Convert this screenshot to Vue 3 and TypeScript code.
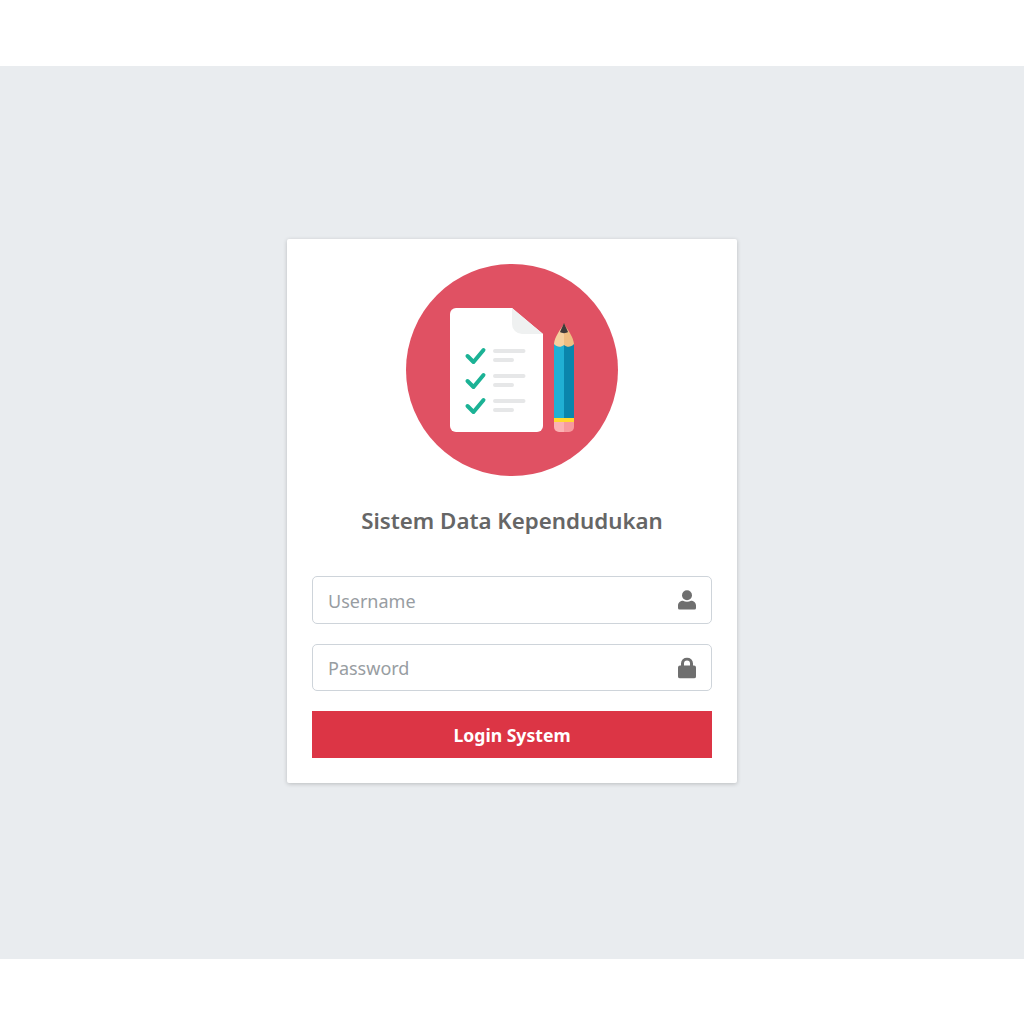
<template>
  <div class="page">
    <div class="login-wrap">
      <div class="card">
        <svg class="logo" viewBox="406 264 212 212" role="img" aria-label="Logo">
          <circle cx="512" cy="370" r="106" fill="#e05163" />
          <path
            d="M456 308H512L543 334V426a6 6 0 0 1-6 6H456a6 6 0 0 1-6-6V314a6 6 0 0 1 6-6Z"
            fill="#fff"
          />
          <path d="M512 308L543 334H522a10 10 0 0 1-10-10Z" fill="#eff1f1" />
          <g v-for="y in rows" :key="y">
            <path
              :d="`M467.5 ${y + 5}L473.5 ${y + 11}L483.5 ${y - 1}`"
              fill="none"
              stroke="#1bb295"
              stroke-width="4"
              stroke-linecap="round"
              stroke-linejoin="round"
            />
            <path
              :d="`M495 ${y}H523.5M495 ${y + 9}H512`"
              fill="none"
              stroke="#e6e7e8"
              stroke-width="4"
              stroke-linecap="round"
            />
          </g>
          <path d="M554 344H564V418H554Z" fill="#20b0d4" />
          <path d="M564 344H574V418H564Z" fill="#0a85ac" />
          <path
            d="M554 344C554.500 337 560 330 564 324V345C561 347.500 557 347.500 554 344Z"
            fill="#f5d09f"
          />
          <path
            d="M574 344C573.500 337 568 330 564 324V345C567 347.500 571 347.500 574 344Z"
            fill="#eebd82"
          />
          <path d="M564 323L560 332C562 333.500 566 333.500 568 332Z" fill="#3e3a3a" />
          <path d="M554 418H574V422H554Z" fill="#ffd92f" />
          <path d="M554 422H564V432H559a5 5 0 0 1-5-5Z" fill="#fbb2b3" />
          <path d="M574 422H564V432H569a5 5 0 0 0 5-5Z" fill="#f79a9e" />
        </svg>
        <h1 class="title">Sistem Data Kependudukan</h1>
        <form class="form" @submit.prevent>
          <div class="field">
            <input class="input input-user" type="text" placeholder="Username" />
            <svg class="field-icon" viewBox="0 0 18 20" aria-hidden="true">
              <circle cx="9" cy="5.200" r="5" />
              <path d="M1.500 19.500A1.500 1.500 0 0 1 0 18V15.500C0 12.500 2.500 10.700 5 10.700C7.500 12 10.500 12 13 10.700C15.500 10.700 18 12.500 18 15.500V18A1.500 1.500 0 0 1 16.500 19.500Z" />
            </svg>
          </div>
          <div class="field field-short">
            <input class="input" type="password" placeholder="Password" />
            <svg class="field-icon field-icon-lock" viewBox="0 0 18 21" aria-hidden="true">
              <path
                fill-rule="evenodd"
                d="M3 8V6a6 6 0 0 1 12 0V8H16a2 2 0 0 1 2 2V19a2 2 0 0 1-2 2H2a2 2 0 0 1-2-2V10a2 2 0 0 1 2-2ZM6 8H12V6a3 3 0 0 0-6 0Z"
              />
            </svg>
          </div>
          <button class="submit" type="submit">Login System</button>
        </form>
      </div>
    </div>
  </div>
</template>

<script setup lang="ts">
const rows: number[] = [351, 376, 401];
</script>

<style scoped>
.page {
  padding: 66px 0 65px;
  background: #fff;
  font-family: "Noto Sans", "Open Sans", sans-serif;
}

.login-wrap {
  display: flex;
  justify-content: center;
  align-items: flex-start;
  height: 893px;
  padding-top: 173px;
  box-sizing: border-box;
  background: #e9ecef;
}

.card {
  display: flex;
  flex-direction: column;
  align-items: center;
  width: 450px;
  height: 544px;
  padding: 25px;
  box-sizing: border-box;
  background: #fff;
  border-radius: 2px;
  box-shadow: 0 1px 4px rgba(0, 0, 0, 0.2);
}

.logo {
  display: block;
  width: 212px;
  height: 212px;
}

.title {
  margin: 28px 0 38px;
  font-size: 22.300px;
  line-height: 34px;
  font-weight: 600;
  color: #666;
  white-space: nowrap;
}

.form {
  display: flex;
  flex-direction: column;
  gap: 20px;
  width: 100%;
}

.field {
  position: relative;
  height: 48px;
}

.field-short {
  height: 47px;
}

.input {
  display: block;
  width: 100%;
  height: 100%;
  padding: 0 48px 0 15px;
  box-sizing: border-box;
  background: #fff;
  border: 1px solid #ced4da;
  border-radius: 5px;
  outline: none;
  font-family: inherit;
  font-size: 18px;
  color: #495057;
}

.input-user {
  padding-top: 2px;
}

.input::placeholder {
  color: #989da2;
  opacity: 1;
}

.field-icon {
  position: absolute;
  top: 50%;
  right: 16px;
  width: 18px;
  height: 20px;
  transform: translateY(-50%);
  fill: #6f6f6f;
}

.field-icon-lock {
  height: 21px;
}

.submit {
  display: block;
  width: 100%;
  height: 47px;
  border: none;
  background: #dc3545;
  color: #fff;
  font-family: inherit;
  font-size: 17.600px;
  font-weight: 700;
  cursor: pointer;
}
</style>
